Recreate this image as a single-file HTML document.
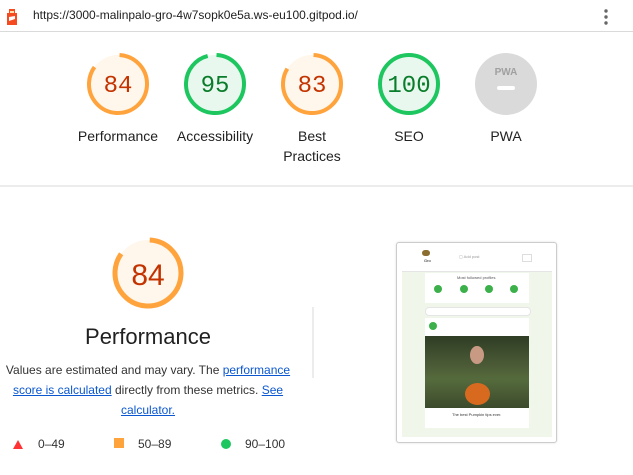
<!DOCTYPE html>
<html><head><style>
body{margin:0;width:633px;height:475px;overflow:hidden;background:#fff;font-family:"Liberation Sans",Arial,sans-serif;position:relative}
.a{position:absolute}
.lbl{position:absolute;width:100px;text-align:center;font-size:14px;color:#212121;line-height:20px}
a{color:#0b57d0;text-decoration:underline}
</style></head><body>
<div class="a" style="left:0;top:0;width:633px;height:31px;border-bottom:1px solid #dadada"></div>
<svg class="a" style="left:6px;top:8px" width="12" height="17" viewBox="0 0 12 17"><rect x="1" y="5" width="10" height="12" fill="#f44b21"/><rect x="3" y="1" width="6" height="5" fill="#f44b21"/><rect x="4" y="3" width="4" height="2" fill="#ffe1a8"/><path d="M3 9 L9 8 L9 11 L3 13Z" fill="#fff"/></svg>
<div class="a" style="left:33px;top:8px;font-size:12px;color:#212121">https://3000-malinpalo-gro-4w7sopk0e5a.ws-eu100.gitpod.io/</div>
<svg class="a" style="left:603px;top:8px" width="6" height="18"><circle cx="3" cy="3" r="1.7" fill="#666"/><circle cx="3" cy="9" r="1.7" fill="#666"/><circle cx="3" cy="15" r="1.7" fill="#666"/></svg>

<svg class="a" style="left:0;top:0" width="633" height="475">
<g font-family="Liberation Mono,monospace" font-size="24" text-anchor="middle">
<circle cx="118" cy="84" r="29" fill="#fff6ec"/>
<circle cx="118" cy="84" r="29" fill="none" stroke="#ffa33d" stroke-width="4" stroke-dasharray="153 200" transform="rotate(-87 118 84)"/>
<text x="118" y="92" fill="#c33300">84</text>
<circle cx="215" cy="84" r="29" fill="#e9f8ee"/>
<circle cx="215" cy="84" r="29" fill="none" stroke="#1ec65f" stroke-width="4" stroke-dasharray="173 200" transform="rotate(-87 215 84)"/>
<text x="215" y="92" fill="#0a7d2c">95</text>
<circle cx="312" cy="84" r="29" fill="#fff6ec"/>
<circle cx="312" cy="84" r="29" fill="none" stroke="#ffa33d" stroke-width="4" stroke-dasharray="151 200" transform="rotate(-87 312 84)"/>
<text x="312" y="92" fill="#c33300">83</text>
<circle cx="409" cy="84" r="29" fill="#e9f8ee" stroke="#1ec65f" stroke-width="4"/>
<text x="409" y="92" fill="#0a7d2c">100</text>
<circle cx="506" cy="84" r="31" fill="#dadada"/>
<text x="506" y="75" fill="#a0a0a0" font-family="Liberation Sans" font-weight="bold" font-size="10">PWA</text>
<rect x="497" y="86" width="18" height="4" rx="2" fill="#fff"/>
<circle cx="148" cy="273" r="33" fill="#fff6ec"/>
<circle cx="148" cy="273" r="33" fill="none" stroke="#ffa33d" stroke-width="5" stroke-dasharray="174 220" transform="rotate(-87 148 273)"/>
<text x="148" y="285" fill="#c33300" font-family="Liberation Sans" font-size="30">84</text>
</g>
<path d="M13 449 L18 440 L23 449Z" fill="#f33"/>
<rect x="114" y="438" width="10" height="10" fill="#ffa33d"/>
<circle cx="226" cy="444" r="5" fill="#1ec65f"/>
<line x1="0" y1="186" x2="633" y2="186" stroke="#dadada"/>
<line x1="313" y1="307" x2="313" y2="378" stroke="#dadada"/>
</svg>
<div class="lbl" style="left:68px;top:126px">Performance</div>
<div class="lbl" style="left:165px;top:126px">Accessibility</div>
<div class="lbl" style="left:262px;top:126px">Best<br>Practices</div>
<div class="lbl" style="left:359px;top:126px">SEO</div>
<div class="lbl" style="left:456px;top:126px">PWA</div>

<div class="a" style="left:48px;top:324px;width:200px;text-align:center;font-size:22px;color:#212121">Performance</div>
<div class="a" style="left:0;top:360px;width:296px;text-align:center;font-size:12px;line-height:20px;color:#333">Values are estimated and may vary. The <a>performance score is calculated</a> directly from these metrics. <a>See calculator.</a></div>
<div class="a" style="left:38px;top:437px;font-size:12px;color:#333">0–49</div>
<div class="a" style="left:138px;top:437px;font-size:12px;color:#333">50–89</div>
<div class="a" style="left:245px;top:437px;font-size:12px;color:#333">90–100</div>

<div class="a" style="left:396px;top:242px;width:159px;height:199px;border:1px solid #ccc;border-radius:3px;box-shadow:0 0 2px #ddd;overflow:hidden;background:#fff">
 <div class="a" style="left:5px;top:4px;width:150px;height:190px;background:#f1f6ea"></div>
 <div class="a" style="left:5px;top:4px;width:150px;height:24px;background:#fff;border-bottom:1px solid #e5e5e5"></div>
 <div class="a" style="left:25px;top:7px;width:8px;height:6px;background:#8a6d2f;border-radius:3px"></div>
 <div class="a" style="left:27px;top:15px;font-size:4px">Gro</div>
 <div class="a" style="left:62px;top:11px;font-size:4px;color:#999">▢ Add post</div>
 <div class="a" style="left:125px;top:11px;width:8px;height:6px;border:1px solid #ddd"></div>
 <div class="a" style="left:28px;top:30px;width:104px;height:30px;background:#fff"></div>
 <div class="a" style="left:60px;top:32px;font-size:4px;color:#555">Most followed profiles</div>
 <div class="a" style="left:37px;top:42px;width:8px;height:8px;border-radius:50%;background:#3cb04a"></div>
 <div class="a" style="left:63px;top:42px;width:8px;height:8px;border-radius:50%;background:#3cb04a"></div>
 <div class="a" style="left:88px;top:42px;width:8px;height:8px;border-radius:50%;background:#3cb04a"></div>
 <div class="a" style="left:113px;top:42px;width:8px;height:8px;border-radius:50%;background:#3cb04a"></div>
 <div class="a" style="left:28px;top:64px;width:104px;height:7px;background:#fff;border:1px solid #e5e5e5;border-radius:4px"></div>
 <div class="a" style="left:28px;top:75px;width:104px;height:110px;background:#fff"></div>
 <div class="a" style="left:32px;top:79px;width:8px;height:8px;border-radius:50%;background:#3cb04a"></div>
 <div class="a" style="left:28px;top:93px;width:104px;height:72px;background:linear-gradient(180deg,#2e3d24,#4b5a36 40%,#556b3c 60%,#3c4a2c)"></div>
 <div class="a" style="left:68px;top:140px;width:25px;height:22px;border-radius:50%;background:#d76a1f"></div>
 <div class="a" style="left:73px;top:103px;width:14px;height:18px;border-radius:50%;background:#c99a83"></div>
 <div class="a" style="left:55px;top:169px;font-size:4px;color:#333">The best Pumpkin tips ever.</div>
</div>
</body></html>
